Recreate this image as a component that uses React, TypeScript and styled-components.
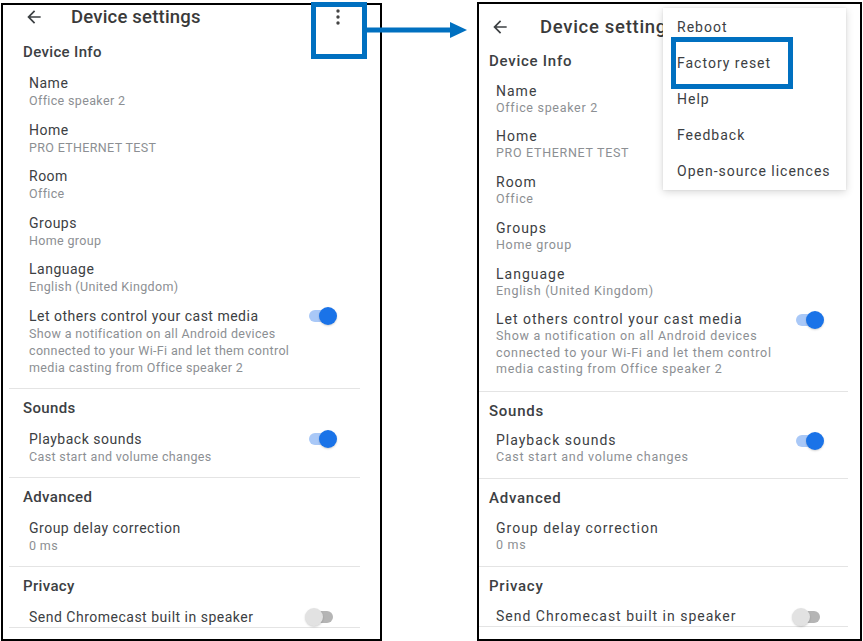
import React from 'react';
import styled, { createGlobalStyle, ThemeProvider } from 'styled-components';

// each screenshot in the picture is scaled a little differently, so each panel gets its own metrics
const leftTheme = {
  screenLeft: 6,
  screenWidth: 351,
  barTop: 0,
  barBottom: 4,
  titleGap: 27,
  titleTracking: 0.2,
  headerTracking: 0.35,
  itemTracking: 0.5,
  subTracking: 0.35,
  headerPb: 6,
  itemPad: 20,
  switchPad: 27,
  titleLh: 18,
  subLh: 17,
  itemPb: 5.5,
  sectionPb: 6.7,
};

const rightTheme = {
  screenLeft: -4,
  screenWidth: 373,
  barTop: 11,
  barBottom: 3,
  titleGap: 30,
  titleTracking: 0.7,
  headerTracking: 0.75,
  itemTracking: 1,
  subTracking: 0.7,
  headerPb: 5.5,
  itemPad: 21,
  switchPad: 28,
  titleLh: 17,
  subLh: 16.5,
  itemPb: 6.25,
  sectionPb: 6.5,
};

const GlobalStyle = createGlobalStyle`
  html, body {
    margin: 0;
    padding: 0;
    background: #fff;
  }
  body {
    font-family: Roboto, "Noto Sans", "Liberation Sans", sans-serif;
  }
  * {
    box-sizing: border-box;
  }
`;

const Canvas = styled.div`
  position: relative;
  width: 863px;
  height: 641px;
  display: flex;
  align-items: flex-start;
  overflow: hidden;
`;

const Frame = styled.div<{ $left: number; $top: number; $width: number }>`
  position: relative;
  flex: none;
  margin-left: ${(p) => p.$left}px;
  margin-top: ${(p) => p.$top}px;
  width: ${(p) => p.$width}px;
  height: ${(p) => 641 - p.$top}px;
  border: 2px solid #000;
  background: #fff;
  overflow: hidden;
`;

const Screen = styled.div`
  margin-left: ${(p) => p.theme.screenLeft}px;
  width: ${(p) => p.theme.screenWidth}px;
  color: #3c4043;
`;

const AppBar = styled.div`
  display: flex;
  align-items: center;
  height: 24px;
  margin-top: ${(p) => p.theme.barTop}px;
  margin-bottom: ${(p) => p.theme.barBottom}px;
  padding: 0 12px 0 15px;
`;

const BackIcon = styled.svg`
  flex: none;
  width: 20px;
  height: 20px;
  fill: #3c4043;
`;

const Title = styled.h1`
  flex: 1;
  margin: 0 0 0 ${(p) => p.theme.titleGap}px;
  font-size: 18.5px;
  font-weight: 500;
  line-height: 24px;
  letter-spacing: ${(p) => p.theme.titleTracking}px;
  color: #3a3a3a;
  white-space: nowrap;
`;

const Kebab = styled.svg`
  flex: none;
  width: 20px;
  height: 20px;
  fill: #444;
`;

const Section = styled.section<{ $last?: boolean }>`
  padding-bottom: ${(p) => (p.$last ? 1 : p.theme.sectionPb)}px;
  border-bottom: 1px solid #e4e4e4;
`;

const SectionTitle = styled.h2`
  margin: 0;
  padding: 9px 0 ${(p) => p.theme.headerPb}px 14px;
  font-size: 15px;
  font-weight: 500;
  line-height: 20px;
  letter-spacing: ${(p) => p.theme.headerTracking}px;
  color: #3c4043;
`;

const Item = styled.div<{ $single?: boolean }>`
  display: flex;
  align-items: flex-start;
  justify-content: space-between;
  padding: 6px ${(p) => p.theme.switchPad}px ${(p) => (p.$single ? 0 : p.theme.itemPb)}px
    ${(p) => p.theme.itemPad}px;
`;

const ItemText = styled.div`
  flex: 1;
  min-width: 0;
`;

const ItemTitle = styled.div`
  font-size: 14px;
  line-height: ${(p) => p.theme.titleLh}px;
  letter-spacing: ${(p) => p.theme.itemTracking}px;
  color: #3c4043;
  white-space: nowrap;
`;

const ItemSub = styled.div`
  font-size: 12.5px;
  line-height: ${(p) => p.theme.subLh}px;
  letter-spacing: ${(p) => p.theme.subTracking}px;
  color: #8c8f93;
  white-space: pre-line;
`;

const Track = styled.span<{ $on: boolean }>`
  flex: none;
  display: flex;
  align-items: center;
  justify-content: ${(p) => (p.$on ? 'flex-end' : 'flex-start')};
  width: 24px;
  height: 12px;
  margin-top: 3px;
  border-radius: 6px;
  background: ${(p) => (p.$on ? '#a9c8f7' : '#b5b5b5')};
`;

const Thumb = styled.span<{ $on: boolean }>`
  flex: none;
  width: 18px;
  height: 18px;
  border-radius: 50%;
  margin: ${(p) => (p.$on ? '0 -4px 0 0' : '0 0 0 -4px')};
  background: ${(p) => (p.$on ? '#1a73e8' : '#e2e2e2')};
  box-shadow: 0 1px 2px rgba(0, 0, 0, 0.18);
`;

const Menu = styled.ul`
  position: absolute;
  top: 4px;
  left: 184px;
  width: 183px;
  margin: 0;
  padding: 1px 0;
  list-style: none;
  background: #fff;
  box-shadow: 0 2px 8px rgba(0, 0, 0, 0.16), 0 0 2px rgba(0, 0, 0, 0.08);
  z-index: 2;
`;

const MenuItem = styled.li`
  display: flex;
  align-items: center;
  height: 36px;
  padding-left: 14px;
  font-size: 14px;
  letter-spacing: 1px;
  color: #3c4043;
  white-space: nowrap;
`;

const Callout = styled.div<{ $x: number; $y: number; $w: number; $h: number }>`
  position: absolute;
  left: ${(p) => p.$x}px;
  top: ${(p) => p.$y}px;
  width: ${(p) => p.$w}px;
  height: ${(p) => p.$h}px;
  border: 5px solid #0070c0;
  z-index: 5;
`;

const Pointer = styled.svg`
  position: absolute;
  left: 366px;
  top: 20px;
  width: 102px;
  height: 20px;
  z-index: 5;
`;

const Switch = ({ on }: { on: boolean }) => (
  <Track $on={on}>
    <Thumb $on={on} />
  </Track>
);

interface RowProps {
  title: string;
  sub?: string;
  toggle?: boolean;
}

const Row: React.FC<RowProps> = ({ title, sub, toggle }) => (
  <Item $single={!sub}>
    <ItemText>
      <ItemTitle>{title}</ItemTitle>
      {sub && <ItemSub>{sub}</ItemSub>}
    </ItemText>
    {toggle !== undefined && <Switch on={toggle} />}
  </Item>
);

const deviceInfo: RowProps[] = [
  { title: 'Name', sub: 'Office speaker 2' },
  { title: 'Home', sub: 'PRO ETHERNET TEST' },
  { title: 'Room', sub: 'Office' },
  { title: 'Groups', sub: 'Home group' },
  { title: 'Language', sub: 'English (United Kingdom)' },
  {
    title: 'Let others control your cast media',
    sub: 'Show a notification on all Android devices\nconnected to your Wi-Fi and let them control\nmedia casting from Office speaker 2',
    toggle: true,
  },
];

const menuItems = ['Reboot', 'Factory reset', 'Help', 'Feedback', 'Open-source licences'];

const SettingsScreen = () => (
  <Screen>
    <AppBar>
      <BackIcon viewBox="0 0 24 24">
        <path d="M20 11H7.83l5.59-5.59L12 4l-8 8 8 8 1.41-1.41L7.83 13H20v-2z" />
      </BackIcon>
      <Title>Device settings</Title>
      <Kebab viewBox="0 0 20 20">
        <circle cx="10" cy="4" r="1.7" />
        <circle cx="10" cy="10" r="1.7" />
        <circle cx="10" cy="16" r="1.7" />
      </Kebab>
    </AppBar>

    <Section>
      <SectionTitle>Device Info</SectionTitle>
      {deviceInfo.map((r) => (
        <Row key={r.title} {...r} />
      ))}
    </Section>

    <Section>
      <SectionTitle>Sounds</SectionTitle>
      <Row title="Playback sounds" sub="Cast start and volume changes" toggle={true} />
    </Section>

    <Section>
      <SectionTitle>Advanced</SectionTitle>
      <Row title="Group delay correction" sub="0 ms" />
    </Section>

    <Section $last>
      <SectionTitle>Privacy</SectionTitle>
      <Row title="Send Chromecast built in speaker" toggle={false} />
    </Section>
  </Screen>
);

export default function App() {
  return (
    <>
      <GlobalStyle />
      <Canvas>
        <ThemeProvider theme={leftTheme}>
          <Frame $left={1} $top={3} $width={381}>
            <SettingsScreen />
          </Frame>
        </ThemeProvider>

        <ThemeProvider theme={rightTheme}>
          <Frame $left={95} $top={2} $width={385}>
            <SettingsScreen />
            <Menu>
              {menuItems.map((m) => (
                <MenuItem key={m}>{m}</MenuItem>
              ))}
            </Menu>
          </Frame>
        </ThemeProvider>

        <Callout $x={311} $y={2} $w={56} $h={57} />
        <Callout $x={671} $y={37} $w={122} $h={52} />
        <Pointer viewBox="0 0 102 20">
          <rect x="0" y="7.5" width="86" height="5" fill="#0070c0" />
          <polygon points="84,2 101,10 84,18" fill="#0070c0" />
        </Pointer>
      </Canvas>
    </>
  );
}
